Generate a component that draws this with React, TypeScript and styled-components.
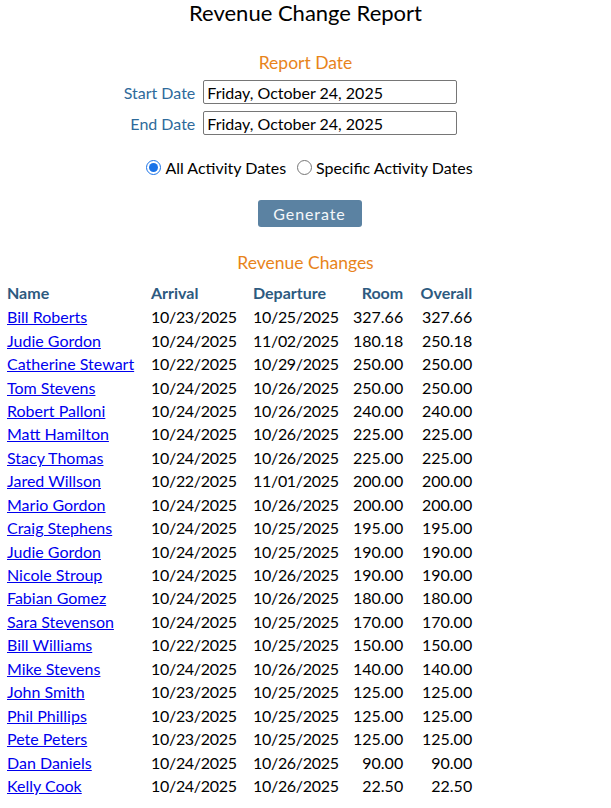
import { createGlobalStyle, styled } from "styled-components";

const GlobalStyle = createGlobalStyle`
	body {
		margin: 0;
		padding: 0 7px;
		font-family: Lato, "Open Sans", sans-serif;
		font-size: 16px;
		color: #000;
		background: #fff;
	}
`;

const Page = styled.div`
	display: flex;
	flex-direction: column;
`;

const Title = styled.h1`
	margin: 0;
	font-size: 22px;
	font-weight: normal;
	text-align: center;
	line-height: 26px;
`;

const SectionTitle = styled.h2`
	margin: 0;
	font-size: 17.5px;
	font-weight: normal;
	color: #e8841a;
	text-align: center;
	line-height: 20px;
`;

const Form = styled.div`
	display: flex;
	flex-direction: column;
	align-items: center;
	margin-top: 27px;
`;

const DateGrid = styled.div`
	display: grid;
	grid-template-columns: auto 254px;
	column-gap: 8px;
	row-gap: 7px;
	align-items: center;
	margin-top: 7px;
	margin-right: 30px;
`;

const Label = styled.label`
	color: #2e6a9b;
	text-align: right;
`;

const DateInput = styled.input`
	box-sizing: border-box;
	height: 24px;
	width: 254px;
	border: 1px solid #767676;
	border-radius: 2px;
	padding: 0 3px;
	font-family: Lato, sans-serif;
	font-size: 16px;
	color: #000;
`;

const RadioRow = styled.div`
	display: flex;
	align-items: center;
	margin-top: 23px;
	margin-left: 8px;
`;

const RadioOption = styled.label`
	display: flex;
	align-items: center;
	gap: 4px;
	margin-right: 11px;
	&:last-child {
		margin-right: 0;
	}
`;

const Radio = styled.input`
	margin: 0;
	width: 15px;
	height: 15px;
	accent-color: #1a73e8;
`;

const Button = styled.button`
	margin-top: 23px;
	margin-left: 8px;
	width: 104px;
	height: 27px;
	border: none;
	border-radius: 3px;
	background: #5b82a2;
	color: #f4f7fa;
	font-family: Lato, sans-serif;
	font-size: 16px;
	letter-spacing: 0.9px;
`;

const Results = styled.div`
	margin-top: 26px;
`;

const Table = styled.table`
	border-collapse: separate;
	border-spacing: 0;
	margin-top: 7px;
`;

const Th = styled.th<{ $right?: boolean }>`
	color: #2d5a80;
	font-weight: bold;
	text-align: ${(p) => (p.$right ? "right" : "left")};
	padding: 0;
	height: 25px;
`;

const Td = styled.td<{ $right?: boolean; $date?: boolean }>`
	text-align: ${(p) => (p.$right ? "right" : "left")};
	letter-spacing: ${(p) => (p.$date ? "-0.3px" : "normal")};
	height: 23.45px;
	padding: 0;
	white-space: nowrap;
`;

const NameLink = styled.a`
	color: #0000ee;
	text-decoration: underline;
`;

const rows = [
	["Bill Roberts", "10/23/2025", "10/25/2025", "327.66", "327.66"],
	["Judie Gordon", "10/24/2025", "11/02/2025", "180.18", "250.18"],
	["Catherine Stewart", "10/22/2025", "10/29/2025", "250.00", "250.00"],
	["Tom Stevens", "10/24/2025", "10/26/2025", "250.00", "250.00"],
	["Robert Palloni", "10/24/2025", "10/26/2025", "240.00", "240.00"],
	["Matt Hamilton", "10/24/2025", "10/26/2025", "225.00", "225.00"],
	["Stacy Thomas", "10/24/2025", "10/26/2025", "225.00", "225.00"],
	["Jared Willson", "10/22/2025", "11/01/2025", "200.00", "200.00"],
	["Mario Gordon", "10/24/2025", "10/26/2025", "200.00", "200.00"],
	["Craig Stephens", "10/24/2025", "10/25/2025", "195.00", "195.00"],
	["Judie Gordon", "10/24/2025", "10/25/2025", "190.00", "190.00"],
	["Nicole Stroup", "10/24/2025", "10/26/2025", "190.00", "190.00"],
	["Fabian Gomez", "10/24/2025", "10/26/2025", "180.00", "180.00"],
	["Sara Stevenson", "10/24/2025", "10/25/2025", "170.00", "170.00"],
	["Bill Williams", "10/22/2025", "10/25/2025", "150.00", "150.00"],
	["Mike Stevens", "10/24/2025", "10/26/2025", "140.00", "140.00"],
	["John Smith", "10/23/2025", "10/25/2025", "125.00", "125.00"],
	["Phil Phillips", "10/23/2025", "10/25/2025", "125.00", "125.00"],
	["Pete Peters", "10/23/2025", "10/25/2025", "125.00", "125.00"],
	["Dan Daniels", "10/24/2025", "10/26/2025", "90.00", "90.00"],
	["Kelly Cook", "10/24/2025", "10/26/2025", "22.50", "22.50"],
];

function App() {
	return (
		<Page>
			<GlobalStyle />
			<Title>Revenue Change Report</Title>
			<Form>
				<SectionTitle>Report Date</SectionTitle>
				<DateGrid>
					<Label>Start Date</Label>
					<DateInput defaultValue="Friday, October 24, 2025" />
					<Label>End Date</Label>
					<DateInput defaultValue="Friday, October 24, 2025" />
				</DateGrid>
				<RadioRow>
					<RadioOption>
						<Radio type="radio" name="act" defaultChecked />
						All Activity Dates
					</RadioOption>
					<RadioOption>
						<Radio type="radio" name="act" />
						Specific Activity Dates
					</RadioOption>
				</RadioRow>
				<Button>Generate</Button>
			</Form>
			<Results>
				<SectionTitle>Revenue Changes</SectionTitle>
				<Table>
					<colgroup>
						<col style={{ width: 144 }} />
						<col style={{ width: 102 }} />
						<col style={{ width: 100 }} />
						<col style={{ width: 50 }} />
						<col style={{ width: 69 }} />
					</colgroup>
					<thead>
						<tr>
							<Th>Name</Th>
							<Th>Arrival</Th>
							<Th>Departure</Th>
							<Th $right>Room</Th>
							<Th $right>Overall</Th>
						</tr>
					</thead>
					<tbody>
						{rows.map((r, i) => (
							<tr key={i}>
								<Td>
									<NameLink href="#">{r[0]}</NameLink>
								</Td>
								<Td $date>{r[1]}</Td>
								<Td $date>{r[2]}</Td>
								<Td $right>{r[3]}</Td>
								<Td $right>{r[4]}</Td>
							</tr>
						))}
					</tbody>
				</Table>
			</Results>
		</Page>
	);
}

export default App;
